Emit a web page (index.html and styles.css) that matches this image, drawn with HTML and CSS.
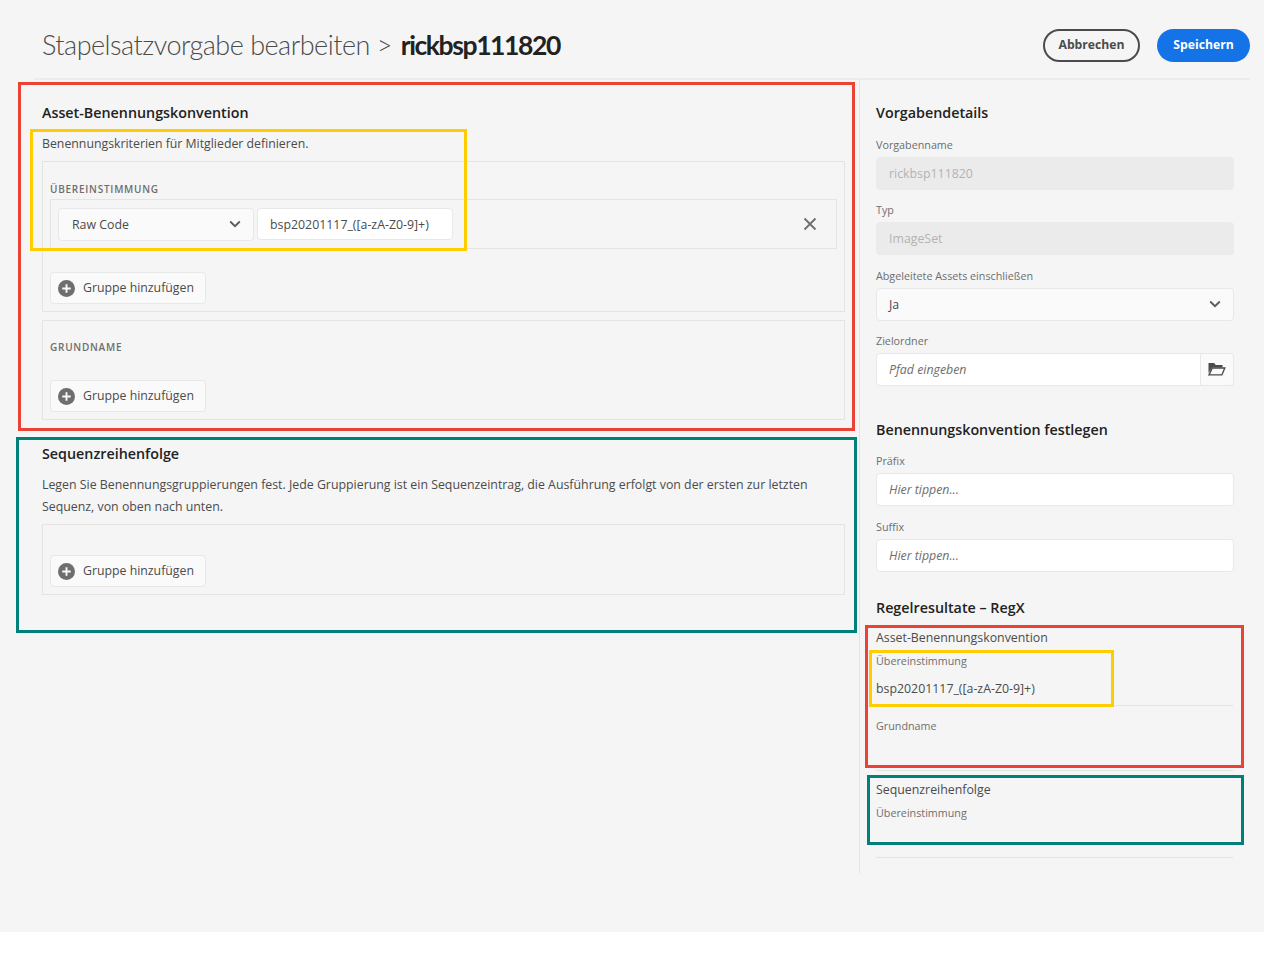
FILE: index.html
```html
<!DOCTYPE html>
<html lang="de">
<head>
<meta charset="utf-8">
<title>Stapelsatzvorgabe bearbeiten</title>
<link rel="stylesheet" href="styles.css">
</head>
<body>
<div class="page">
  <header class="header">
    <h1 class="title"><span class="title-light">Stapelsatzvorgabe bearbeiten &gt; </span><strong class="title-strong">rickbsp111820</strong></h1>
    <div class="actions">
      <button class="btn btn-cancel">Abbrechen</button>
      <button class="btn btn-save">Speichern</button>
    </div>
  </header>
  <div class="main">
    <section class="left">
      <h2 class="heading">Asset-Benennungskonvention</h2>
      <p class="intro">Benennungskriterien für Mitglieder definieren.</p>
      <div class="group group-match">
        <div class="caps caps-match">ÜBEREINSTIMMUNG</div>
        <div class="rule-row">
          <div class="control select select-left"><span>Raw Code</span>
            <svg class="chev" viewBox="0 0 12 8"><path d="M1.2 1.5 6 6.2l4.8-4.7"/></svg>
          </div>
          <div class="control input-left">bsp20201117_([a-zA-Z0-9]+)</div>
          <svg class="close" viewBox="0 0 14 14"><path d="M1.5 1.5l11 11M12.5 1.5l-11 11"/></svg>
        </div>
        <button class="add add-match"><svg class="plus" viewBox="0 0 18 18"><circle cx="9" cy="9" r="9"/><path d="M9 4.5v9M4.5 9h9"/></svg>Gruppe hinzufügen</button>
      </div>
      <div class="group group-base">
        <div class="caps caps-base">GRUNDNAME</div>
        <button class="add add-base"><svg class="plus" viewBox="0 0 18 18"><circle cx="9" cy="9" r="9"/><path d="M9 4.5v9M4.5 9h9"/></svg>Gruppe hinzufügen</button>
      </div>
      <h2 class="heading heading-seq">Sequenzreihenfolge</h2>
      <p class="seq-text">Legen Sie Benennungsgruppierungen fest. Jede Gruppierung ist ein Sequenzeintrag, die Ausführung erfolgt von der ersten zur letzten Sequenz, von oben nach unten.</p>
      <div class="group group-seq">
        <button class="add add-seq"><svg class="plus" viewBox="0 0 18 18"><circle cx="9" cy="9" r="9"/><path d="M9 4.5v9M4.5 9h9"/></svg>Gruppe hinzufügen</button>
      </div>
    </section>
    <aside class="right">
      <h2 class="heading">Vorgabendetails</h2>
      <div class="field field-first"><label class="label">Vorgabenname</label><div class="control disabled">rickbsp111820</div></div>
      <div class="field"><label class="label">Typ</label><div class="control disabled">ImageSet</div></div>
      <div class="field"><label class="label">Abgeleitete Assets einschließen</label>
        <div class="control select"><span>Ja</span><svg class="chev" viewBox="0 0 12 8"><path d="M1.2 1.5 6 6.2l4.8-4.7"/></svg></div>
      </div>
      <div class="field"><label class="label">Zielordner</label>
        <div class="path">
          <div class="control placeholder path-input">Pfad eingeben</div>
          <div class="path-btn"><svg class="folder" viewBox="0 0 18 14"><path class="folder-tab" d="M.5 1h5.6l1.6 2h6.8v2.4H4L.5 11z"/><path class="folder-body" d="M1 12.9 4.3 6h12.5l-2.9 6.9z"/></svg></div>
        </div>
      </div>
      <h2 class="heading heading-naming">Benennungskonvention festlegen</h2>
      <div class="field field-prefix"><label class="label">Präfix</label><div class="control placeholder">Hier tippen...</div></div>
      <div class="field field-suffix"><label class="label">Suffix</label><div class="control placeholder">Hier tippen...</div></div>
      <h2 class="heading heading-result">Regelresultate – RegX</h2>
      <div class="res-title">Asset-Benennungskonvention</div>
      <div class="label res-label">Übereinstimmung</div>
      <div class="res-value">bsp20201117_([a-zA-Z0-9]+)</div>
      <div class="res-block">
        <div class="label">Grundname</div>
      </div>
      <div class="res-title res-title-seq">Sequenzreihenfolge</div>
      <div class="label res-label">Übereinstimmung</div>
      <div class="res-end"></div>
    </aside>
  </div>
  <div class="mark mark-red-a"></div>
  <div class="mark mark-yellow-a"></div>
  <div class="mark mark-teal-a"></div>
  <div class="mark mark-red-b"></div>
  <div class="mark mark-yellow-b"></div>
  <div class="mark mark-teal-b"></div>
</div>
</body>
</html>
```
FILE: styles.css
```css
* { box-sizing: border-box; }
html, body { margin: 0; padding: 0; background: #fff; }
body { font-family: "Open Sans", "Noto Sans", sans-serif; color: #4b4b4b; font-size: 12.35px; }
.page { position: relative; height: 932px; background: #f5f5f5; overflow: hidden; }

.header { display: flex; justify-content: space-between; align-items: center; height: 80px; margin: 0 14px 0 34px; padding: 16px 0 3px 8px; border-bottom: 2px solid #ebebeb; }
.title { margin: 0 0 2px; font-size: 27px; line-height: 36px; font-weight: 400; color: #2c2c2c; white-space: nowrap; }
.title-light { font-family: "Lato", sans-serif; font-weight: 300; color: #4b4b4b; letter-spacing: -0.5px; }
.title-strong { margin-left: 2px; font-family: "Lato", sans-serif; font-size: 26.5px; font-weight: 700; color: #222; letter-spacing: -1.4px; }
.actions { display: flex; gap: 17px; }
.btn { height: 33px; border-radius: 17px; font: 700 12.2px/1 "Open Sans", sans-serif; padding: 0; cursor: pointer; }
.btn-cancel { width: 97px; background: transparent; border: 2px solid #4b4b4b; color: #4b4b4b; }
.btn-save { width: 93px; background: #1473e6; border: 0; color: #fff; }

.main { display: flex; margin-top: -1px; }
.left { width: 860px; height: 794px; padding: 0 14px 0 42px; border-right: 1px solid #e4e4e4; }
.right { width: 374px; padding-left: 16px; }

.heading { margin: 24px 0 0; font-size: 14.3px; line-height: 20px; font-weight: 600; color: #222; white-space: nowrap; }
.intro { margin: 11px 0 7px; font-size: 12.3px; line-height: 20px; }
.group { border: 1px solid #e4e4e4; padding: 0 7px; }
.group-match { height: 151px; }
.group-base { height: 100px; margin-top: 8px; }
.group-seq { height: 71px; margin-top: 6px; padding-top: 30px; }
.caps { font-size: 10px; line-height: 14px; font-weight: 600; letter-spacing: 0.75px; color: #6e6e6e; }
.caps-match { padding-top: 20px; }
.caps-base { padding-top: 19px; }
.rule-row { display: flex; align-items: center; gap: 3px; height: 50px; margin-top: 3px; padding: 0 7px; border: 1px solid #e4e4e4; }
.add { display: flex; align-items: center; gap: 8px; width: 156px; height: 32px; padding: 0 7px; border: 1px solid #e8e8e8; border-radius: 4px; background: #fafafa; font: 400 12.3px/1 "Open Sans", sans-serif; color: #4b4b4b; white-space: nowrap; }
.add-match { margin-top: 23px; }
.add-base { margin-top: 26px; }
.plus { width: 17px; height: 17px; flex: none; }
.plus circle { fill: #6e6e6e; }
.plus path { stroke: #fafafa; stroke-width: 2; fill: none; }

.control { display: flex; align-items: center; height: 33px; padding: 0 12px; border: 1px solid #e8e8e8; border-radius: 4px; background: #fff; font-size: 12.35px; white-space: nowrap; }
.select { justify-content: space-between; background: #fafafa; }
.select-left { width: 196px; flex: none; padding-left: 13px; }
.input-left { width: 196px; flex: none; height: 32px; }
.chev { width: 12px; height: 8px; fill: none; stroke: #5a5a5a; stroke-width: 1.8; }
.close { width: 14px; height: 14px; margin-left: auto; margin-right: 12px; fill: none; stroke: #6e6e6e; stroke-width: 1.8; }
.heading-seq { margin-top: 24px; }
.seq-text { margin: 10px 0 0; font-size: 12.35px; line-height: 22px; width: 790px; }

.label { display: block; font-size: 10.75px; line-height: 16px; color: #6e6e6e; white-space: nowrap; }
.field { margin-top: 12.33px; }
.field .label { margin-bottom: 4px; }
.field-first { margin-top: 14px; }
.disabled { background: #ebebeb; border-color: #ebebeb; color: #b3b3b3; }
.placeholder { font-style: italic; color: #6e6e6e; }
.path { display: flex; }
.path-input { flex: 1; border-radius: 4px 0 0 4px; }
.path-btn { display: flex; align-items: center; justify-content: center; width: 33px; height: 33px; border: 1px solid #e8e8e8; border-left: 0; border-radius: 0 4px 4px 0; background: #fafafa; }
.folder { width: 18px; height: 14px; }
.folder-tab { fill: #4b4b4b; }
.folder-body { fill: #fafafa; stroke: #4b4b4b; stroke-width: 1.4; }
.heading-naming { margin-top: 34px; }
.field-prefix { margin-top: 13px; }
.field-suffix { margin-top: 13px; }
.heading-result { margin-top: 26px; }

.res-title { margin-top: 10px; font-size: 12.35px; line-height: 20px; white-space: nowrap; }
.res-label { margin-top: 5px; }
.res-value { margin-top: 10px; padding-bottom: 6px; height: 27px; font-size: 12.35px; line-height: 20px; border-bottom: 1px solid #e4e4e4; width: 357px; }
.res-block { height: 65px; padding-top: 12px; border-bottom: 1px solid #e4e4e4; width: 357px; }
.res-title-seq { margin-top: 9px; }
.res-end { width: 357px; height: 37px; border-bottom: 1px solid #e4e4e4; }

.mark { position: absolute; border-style: solid; border-width: 3px; pointer-events: none; }
.mark-red-a { left: 18px; top: 82px; width: 837px; height: 349px; border-color: #ea4335; }
.mark-yellow-a { left: 30px; top: 129px; width: 437px; height: 122px; border-color: #ffcc00; }
.mark-teal-a { left: 16px; top: 437px; width: 841px; height: 196px; border-color: #00807a; }
.mark-red-b { left: 865px; top: 625px; width: 379px; height: 143px; border-color: #ea4335; }
.mark-yellow-b { left: 869px; top: 650px; width: 245px; height: 57px; border-color: #ffcc00; }
.mark-teal-b { left: 867px; top: 775px; width: 377px; height: 70px; border-color: #00807a; }
```
